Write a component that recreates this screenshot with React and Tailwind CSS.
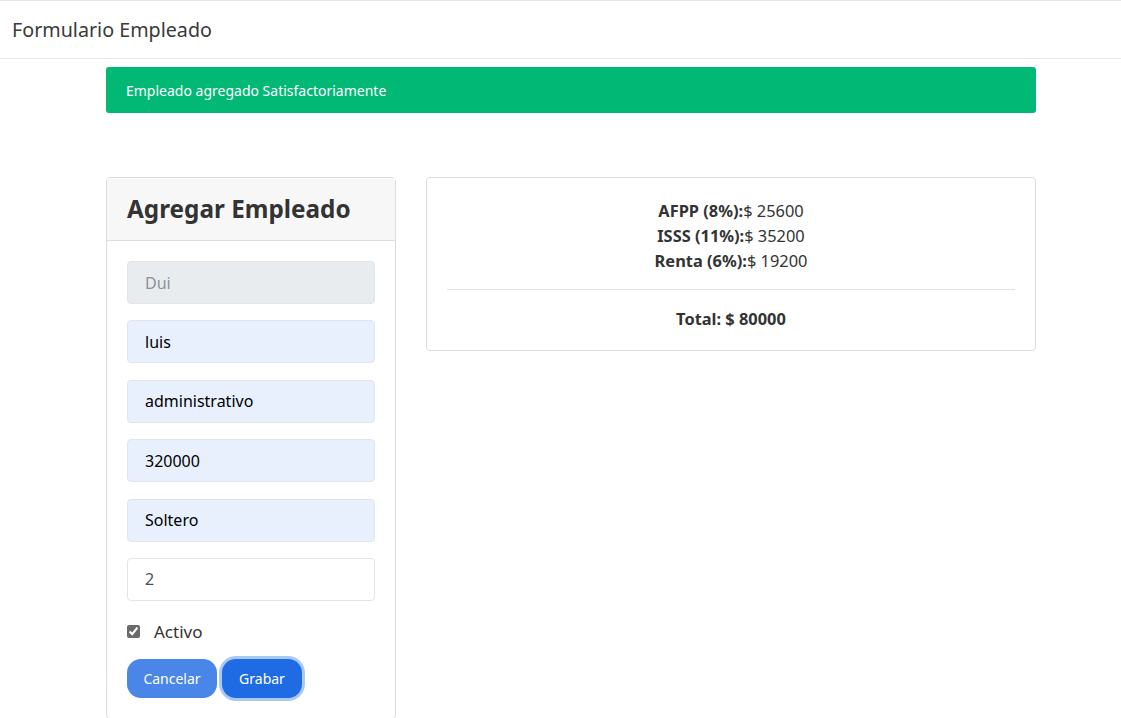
const fields = [
  { value: "", placeholder: "Dui", disabled: true },
  { value: "luis", auto: true },
  { value: "administrativo", auto: true },
  { value: "320000", auto: true },
  { value: "Soltero", auto: true },
  { value: "2" },
];

const FieldBox = ({ value, placeholder, disabled, auto }) => {
  let tone = "bg-white text-[#495057]";
  if (disabled) tone = "bg-[#e9ecef] text-[#8a939b]";
  if (auto) tone = "bg-[#e8f0fe] text-black";
  return (
    <div
      className={`h-[43px] w-full rounded-[4px] border border-[#e2e5e8] px-[17px] flex items-center text-[16px] ${tone}`}
    >
      {value || placeholder}
    </div>
  );
};

export default function App() {
  return (
    <div className="min-h-[718px] bg-white text-[#292b2c] font-['Noto_Sans',sans-serif]">
      {/* navbar */}
      <div className="h-[59px] border-t border-b border-[#e5e5e5] flex items-center px-3">
        <span className="text-[19.7px] text-[#3a3a3a]">Formulario Empleado</span>
      </div>

      <div className="pl-[106px] w-[1036px]">
        {/* alert */}
        <div className="mt-[8px] h-[46px] rounded-[3px] bg-[#02b875] text-white text-[14px] flex items-center px-5">
          Empleado agregado Satisfactoriamente
        </div>

        <div className="mt-[64px] flex items-start gap-[30px]">
          {/* left card */}
          <div className="w-[290px] shrink-0 rounded-[4px] border border-[#dcdcdc]">
            <div className="h-[63px] bg-[#f7f7f7] border-b border-[#dcdcdc] px-5 flex items-center">
              <h3 className="text-[24.3px] font-bold text-[#333]">Agregar Empleado</h3>
            </div>
            <div className="px-5 pt-[20px] pb-5">
              <div className="flex flex-col gap-[16.4px]">
                {fields.map((f, i) => (
                  <FieldBox key={i} {...f} />
                ))}
              </div>
              <label className="mt-[18px] flex items-center gap-[14px] text-[17px] text-[#333]">
                <input type="checkbox" defaultChecked className="w-[13px] h-[13px] accent-[#6b6b6b]" />
                Activo
              </label>
              <div className="mt-[15px] flex gap-[5px]">
                <button className="h-[39px] w-[90px] rounded-[14px] bg-[#4a86e8] text-white text-[14px]">
                  Cancelar
                </button>
                <button className="h-[39px] w-[80px] rounded-[14px] bg-[#1f6be3] text-white text-[14px] ring-[3px] ring-[#a9c8f7]">
                  Grabar
                </button>
              </div>
            </div>
          </div>

          {/* right card */}
          <div className="w-[610px] rounded-[4px] border border-[#dcdcdc] px-5 pt-[20px] pb-[19px] text-center text-[16.4px] text-[#333]">
            <div className="leading-[25px]">
              <p>
                <b>AFPP (8%):</b>$ 25600
              </p>
              <p>
                <b>ISSS (11%):</b>$ 35200
              </p>
              <p>
                <b>Renta (6%):</b>$ 19200
              </p>
            </div>
            <hr className="mt-[16px] mb-[17px] border-[#e3e3e3]" />
            <p className="font-bold leading-[24px]">Total: $ 80000</p>
          </div>
        </div>
      </div>
    </div>
  );
}
